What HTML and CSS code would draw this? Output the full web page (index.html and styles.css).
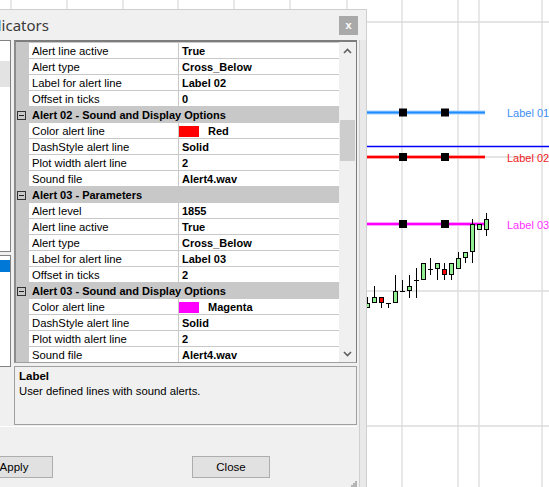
FILE: index.html
```html
<!DOCTYPE html>
<html>
<head>
<meta charset="utf-8">
<link rel="stylesheet" href="styles.css">
</head>
<body>
<div class="screen">
  <svg class="chart" width="549" height="487" viewBox="0 0 549 487">
    <rect x="0" y="0" width="549" height="487" fill="#fff"/>
    <g stroke="#dcdcdc" stroke-width="1.3">
      <path d="M11 0V487 M67 0V487 M123 0V487 M178 0V487 M234 0V487 M290 0V487 M347 0V487 M402 0V487 M458 0V487 M479 0V487 M542 0V487"/>
      <path d="M0 22H549 M0 157H549 M0 291H549 M0 426H549"/>
    </g>
    <line x1="0" y1="146.5" x2="549" y2="146.5" stroke="#0000ff" stroke-width="1.5"/>
    <line x1="0" y1="112.5" x2="485" y2="112.5" stroke="#a8d2ff" stroke-width="4"/>
    <line x1="0" y1="112.5" x2="485" y2="112.5" stroke="#1e8cff" stroke-width="2"/>
    <line x1="0" y1="157" x2="485" y2="157" stroke="#ffa0a0" stroke-width="4"/>
    <line x1="0" y1="157" x2="485" y2="157" stroke="#ff0000" stroke-width="2"/>
    <line x1="0" y1="224" x2="485" y2="224" stroke="#ffa0ff" stroke-width="4"/>
    <line x1="0" y1="224" x2="485" y2="224" stroke="#ff00ff" stroke-width="2"/>
    <g fill="#000">
      <rect x="399" y="108.5" width="8" height="8"/>
      <rect x="441" y="108.5" width="8" height="8"/>
      <rect x="399" y="153" width="8" height="8"/>
      <rect x="441" y="153" width="8" height="8"/>
      <rect x="399" y="220" width="8" height="8"/>
      <rect x="441" y="220" width="8" height="8"/>
    </g>
    <g font-family="Liberation Sans, Arial, sans-serif" font-size="11">
      <text x="507" y="116.5" fill="#3d8ef0">Label 01</text>
      <text x="507" y="161.5" fill="#f01c1c">Label 02</text>
      <text x="507" y="228.5" fill="#ff30ff">Label 03</text>
    </g>
    <g stroke="#000" stroke-width="1">
      <path d="M367.5 297V308 M374.5 286V303 M381.5 297V308 M388.5 303V308 M395.5 275V303 M402.5 280V291 M409.5 275V298 M416.5 268V298 M423.5 263V280 M430.5 258V275 M437.5 263V280 M444.5 263V280 M451.5 263V280 M458.5 252V269 M465.5 252V263 M472.5 219V263 M479.5 224V230 M486.5 213V236"/>
      <path d="M386 303.5H391 M400 291.5H405 M414 280.5H419 M428 269.5H433"/>
      <g fill="#90ee90">
        <rect x="365.5" y="303.5" width="4" height="4"/>
        <rect x="372.5" y="297.5" width="4" height="5"/>
        <rect x="393.5" y="291.5" width="4" height="11"/>
        <rect x="407.5" y="286.5" width="4" height="4"/>
        <rect x="421.5" y="263.5" width="4" height="16"/>
        <rect x="435.5" y="263.5" width="4" height="5"/>
        <rect x="449.5" y="263.5" width="4" height="11"/>
        <rect x="456.5" y="258.5" width="4" height="10"/>
        <rect x="463.5" y="252.5" width="4" height="5"/>
        <rect x="470.5" y="224.5" width="4" height="27"/>
        <rect x="477.5" y="224.5" width="4" height="5"/>
        <rect x="484.5" y="219.5" width="4" height="10"/>
      </g>
      <g fill="#ff0000">
        <rect x="379.5" y="297.5" width="4" height="5"/>
        <rect x="442.5" y="269.5" width="4" height="5"/>
      </g>
    </g>
  </svg>

  <div class="dialog">
    <div class="titlebar">
      <span class="title">Indicators</span>
      <span class="close">x</span>
    </div>
    <div class="body">
      <div class="content">
        <div class="top">
          <div class="side">
            <div class="panel panel-a"><div class="item item-grey"></div></div>
            <div class="panel panel-b"><div class="item item-sel"></div></div>
          </div>
          <div class="main">
            <div class="pgrid">
              <div class="rows">
                <div class="row"><div class="m"></div><div class="l">Alert line active</div><div class="v">True</div></div>
                <div class="row"><div class="m"></div><div class="l">Alert type</div><div class="v">Cross_Below</div></div>
                <div class="row"><div class="m"></div><div class="l">Label for alert line</div><div class="v">Label 02</div></div>
                <div class="row"><div class="m"></div><div class="l">Offset in ticks</div><div class="v">0</div></div>
                <div class="row cat"><div class="m"><span class="minus"></span></div><div class="ct">Alert 02 - Sound and Display Options</div></div>
                <div class="row"><div class="m"></div><div class="l">Color alert line</div><div class="v"><span class="sw sw-red"></span>Red</div></div>
                <div class="row"><div class="m"></div><div class="l">DashStyle alert line</div><div class="v">Solid</div></div>
                <div class="row"><div class="m"></div><div class="l">Plot width alert line</div><div class="v">2</div></div>
                <div class="row"><div class="m"></div><div class="l">Sound file</div><div class="v">Alert4.wav</div></div>
                <div class="row cat"><div class="m"><span class="minus"></span></div><div class="ct">Alert 03 - Parameters</div></div>
                <div class="row"><div class="m"></div><div class="l">Alert level</div><div class="v">1855</div></div>
                <div class="row"><div class="m"></div><div class="l">Alert line active</div><div class="v">True</div></div>
                <div class="row"><div class="m"></div><div class="l">Alert type</div><div class="v">Cross_Below</div></div>
                <div class="row"><div class="m"></div><div class="l">Label for alert line</div><div class="v">Label 03</div></div>
                <div class="row"><div class="m"></div><div class="l">Offset in ticks</div><div class="v">2</div></div>
                <div class="row cat"><div class="m"><span class="minus"></span></div><div class="ct">Alert 03 - Sound and Display Options</div></div>
                <div class="row"><div class="m"></div><div class="l">Color alert line</div><div class="v"><span class="sw sw-magenta"></span>Magenta</div></div>
                <div class="row"><div class="m"></div><div class="l">DashStyle alert line</div><div class="v">Solid</div></div>
                <div class="row"><div class="m"></div><div class="l">Plot width alert line</div><div class="v">2</div></div>
                <div class="row"><div class="m"></div><div class="l">Sound file</div><div class="v">Alert4.wav</div></div>
              </div>
              <div class="vscroll">
                <div class="sb-btn sb-up">
                  <svg width="9" height="6" viewBox="0 0 9 6"><polyline points="1,5 4.5,1.5 8,5" fill="none" stroke="#606060" stroke-width="1.6"/></svg>
                </div>
                <div class="thumb"></div>
                <div class="sb-btn sb-down">
                  <svg width="9" height="6" viewBox="0 0 9 6"><polyline points="1,1 4.5,4.5 8,1" fill="none" stroke="#606060" stroke-width="1.6"/></svg>
                </div>
              </div>
            </div>
            <div class="desc">
              <div class="desc-title">Label</div>
              <div class="desc-text">User defined lines with sound alerts.</div>
            </div>
          </div>
        </div>
        <div class="footer">
          <button class="btn btn-apply">Apply</button>
          <button class="btn btn-close">Close</button>
          <svg class="grip" width="6" height="6" viewBox="0 0 6 6">
            <g fill="#b4b4b4"><rect x="4" y="0" width="2" height="2"/><rect x="2" y="2" width="2" height="2"/><rect x="4" y="2" width="2" height="2"/><rect x="0" y="4" width="2" height="2"/><rect x="2" y="4" width="2" height="2"/><rect x="4" y="4" width="2" height="2"/></g>
          </svg>
        </div>
      </div>
      <div class="strip"></div>
    </div>
  </div>
</div>
</body>
</html>
```

FILE: styles.css
```css
html, body {
  margin: 0;
  padding: 0;
}

body {
  width: 549px;
  height: 487px;
  overflow: hidden;
  background: #fff;
  font-family: "Liberation Sans", Arial, sans-serif;
  color: #000;
}

.screen {
  display: grid;
  width: 549px;
  height: 487px;
  overflow: hidden;
}

.chart,
.dialog {
  grid-area: 1 / 1;
}

.chart {
  display: block;
}

.dialog {
  align-self: start;
  justify-self: start;
  margin-top: 9px;
  width: 367px;
  height: 478px;
  box-sizing: border-box;
  border-top: 1px solid #cfcfcf;
  border-right: 1px solid #cfcfcf;
  background: #f0f0f0;
  display: flex;
  flex-direction: column;
  overflow: hidden;
}

.titlebar {
  flex: none;
  height: 30px;
  display: flex;
  align-items: center;
}

.title {
  flex: 1;
  margin-left: -22px;
  font-family: "Noto Sans", "Open Sans", sans-serif;
  font-size: 15px;
  color: #3a3a3a;
  white-space: nowrap;
}

.close {
  width: 19px;
  height: 19px;
  margin-right: 8px;
  background: #a9a9a9;
  color: #fff;
  font-family: "Liberation Sans", Arial, sans-serif;
  font-weight: bold;
  font-size: 11px;
  display: flex;
  align-items: center;
  justify-content: center;
  line-height: 1;
}

.body {
  flex: 1;
  min-height: 0;
  display: flex;
}

.content {
  width: 357px;
  display: flex;
  flex-direction: column;
}

.top {
  flex: none;
  height: 386px;
  display: flex;
}

.side {
  width: 11px;
  flex: none;
  display: flex;
  flex-direction: column;
}

.panel {
  background: #fff;
  border: 1px solid #828282;
  border-left: none;
  box-sizing: border-box;
}

.panel-a {
  height: 212px;
}

.panel-b {
  height: 112px;
  margin-top: 3px;
}

.item-grey {
  margin-top: 20px;
  height: 26px;
  background: #e3e3e3;
}

.item-sel {
  margin-top: 4px;
  height: 12px;
  background: #0078d7;
}

.main {
  margin-left: 3px;
  width: 343px;
  flex: none;
}

.pgrid {
  height: 323px;
  box-sizing: border-box;
  display: flex;
  border-top: 2px solid #7d7d7d;
  border-left: 2px solid #8c8c8c;
  border-right: 1px solid #7d7d7d;
  border-bottom: 1px solid #a0a0a0;
}

.rows {
  width: 323px;
  flex: none;
  overflow: hidden;
  border-top: 1px solid #c8c8c8;
  background: #fff;
}

.row {
  display: flex;
  height: 16px;
}

.m {
  width: 13px;
  flex: none;
  background: #c8c8c8;
}

.l {
  width: 150px;
  flex: none;
  box-sizing: border-box;
  border-right: 1px solid #c8c8c8;
  border-bottom: 1px solid #c8c8c8;
  padding-left: 3px;
  padding-top: 1px;
  font-size: 11.3px;
  line-height: 14px;
  white-space: nowrap;
  overflow: hidden;
}

.v {
  width: 160px;
  flex: none;
  box-sizing: border-box;
  border-bottom: 1px solid #c8c8c8;
  padding-left: 3px;
  padding-top: 1px;
  font-weight: bold;
  font-size: 11px;
  line-height: 14px;
  display: flex;
  align-items: center;
  white-space: nowrap;
}

.cat {
  background: #c8c8c8;
}

.cat .m {
  display: flex;
  align-items: center;
}

.minus {
  width: 9px;
  height: 9px;
  margin-left: 1px;
  box-sizing: border-box;
  border: 1px solid #333;
  display: flex;
  align-items: center;
  justify-content: center;
}

.minus::after {
  content: "";
  width: 5px;
  height: 1px;
  background: #222;
}

.ct {
  padding-left: 3px;
  padding-top: 1px;
  font-weight: bold;
  font-size: 11px;
  line-height: 15px;
  white-space: nowrap;
}

.sw {
  width: 20px;
  height: 11px;
  margin-left: -3px;
  margin-right: 9px;
  flex: none;
}

.sw-red {
  background: #ff0000;
}

.sw-magenta {
  background: #ff00ff;
}

.vscroll {
  width: 17px;
  flex: none;
  background: #f0f0f0;
  display: flex;
  flex-direction: column;
}

.sb-btn {
  height: 18px;
  flex: none;
  display: flex;
  align-items: center;
  justify-content: center;
}

.sb-down {
  height: 17px;
  margin-top: auto;
}

.sb-btn svg {
  display: block;
}

.thumb {
  margin: 60px 1px 0 1px;
  height: 41px;
  background: #cdcdcd;
}

.desc {
  margin-top: 3px;
  height: 59px;
  box-sizing: border-box;
  border: 1px solid #a0a0a0;
  padding: 2px 4px;
  font-size: 11.3px;
  line-height: 15px;
}

.desc-title {
  font-weight: bold;
  font-size: 11.5px;
}

.footer {
  flex: 1;
  border-top: 1px solid #fff;
  display: flex;
  align-items: flex-start;
  padding-top: 29px;
}

.btn {
  width: 78px;
  height: 22px;
  flex: none;
  box-sizing: border-box;
  padding: 0;
  background: #e1e1e1;
  border: 1px solid #adadad;
  font-family: "Liberation Sans", Arial, sans-serif;
  font-size: 11.5px;
  color: #000;
}

.btn-apply {
  margin-left: -25px;
}

.btn-close {
  margin-left: 139px;
}

.grip {
  display: block;
  margin-left: auto;
  align-self: flex-end;
  margin-right: 0;
}

.strip {
  width: 7px;
  margin-left: 2px;
  box-sizing: border-box;
  border-left: 1px solid #cfcfcf;
  background: #e9e9e9;
}
```
